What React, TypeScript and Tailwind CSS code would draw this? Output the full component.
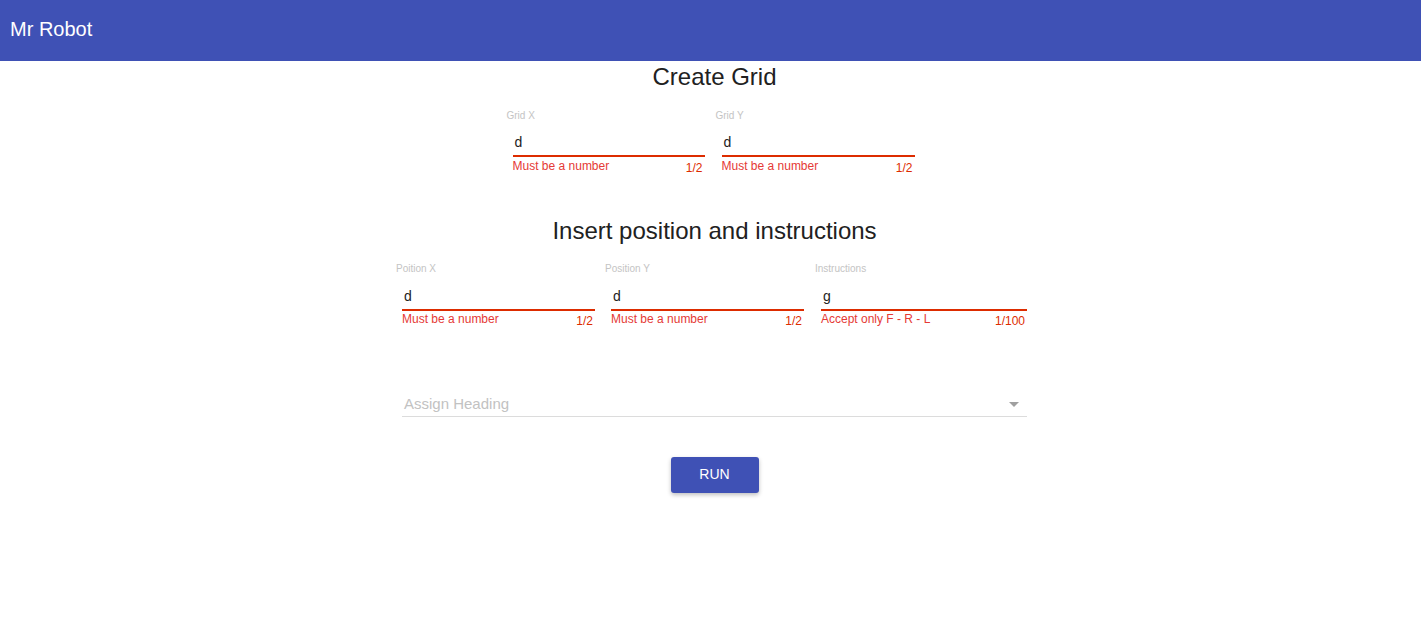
const font = { fontFamily: '"Liberation Sans", Arial, sans-serif' }

type FieldProps = {
  label: string
  value: string
  error: string
  counter: string
  width: string
}

function Field({ label, value, error, counter, width }: FieldProps) {
  return (
    <div className={`flex flex-col ${width}`}>
      <label className="-ml-[6px] text-[10px] leading-[12px] text-[#c4c4c4]">{label}</label>
      <div className="mt-[10.5px] h-[20px] pl-[2px] text-[14px] leading-[20px] text-[#222]">{value}</div>
      <div className="mt-[3px] h-[2px] bg-[#dd2c00]" />
      <div className="mt-[1.5px] flex justify-between text-[12px] leading-[14px]">
        <span className="text-[#e53935]">{error}</span>
        <span className="mt-[2px] pr-[2px] text-[#dd2c00]">{counter}</span>
      </div>
    </div>
  )
}

export default function App() {
  return (
    <div className="min-h-screen bg-white" style={font}>
      {/* App bar */}
      <header className="flex h-[61px] items-center bg-[#3f51b5] px-[10px]">
        <span className="-mt-[3px] text-[20px] text-white">Mr Robot</span>
      </header>

      <div className="flex justify-center pl-[8px]">
        <div className="flex w-[625px] flex-col">
          <h2 className="mt-[2px] text-center text-[24px] leading-[28px] text-[#212121]">Create Grid</h2>

          <div className="mt-[18.5px] flex justify-center gap-[17px] pr-[2px]">
            <Field label="Grid X" value="d" error="Must be a number" counter="1/2" width="w-[192px]" />
            <Field label="Grid Y" value="d" error="Must be a number" counter="1/2" width="w-[193px]" />
          </div>

          <h2 className="mt-[42.5px] text-center text-[24px] leading-[28px] text-[#212121]">
            Insert position and instructions
          </h2>

          <div className="mt-[18px] flex gap-[16px]">
            <Field label="Poition X" value="d" error="Must be a number" counter="1/2" width="w-[193px]" />
            <Field label="Position Y" value="d" error="Must be a number" counter="1/2" width="w-[193px]" />
            <div className="ml-[1px] flex-1">
              <Field label="Instructions" value="g" error="Accept only F - R - L" counter="1/100" width="w-full" />
            </div>
          </div>

          {/* Select */}
          <div className="mt-[65.5px] flex flex-col">
            <div className="flex h-[20px] items-center justify-between pl-[2px] pr-[8px]">
              <span className="text-[15px] leading-[20px] text-[#c2c2c2]">Assign Heading</span>
              <span className="mt-[2px] h-0 w-0 border-x-[5px] border-t-[5px] border-x-transparent border-t-[#a0a0a0]" />
            </div>
            <div className="mt-[2px] h-px bg-[#dcdcdc]" />
          </div>

          <div className="mt-[40px] flex justify-center">
            <button className="h-[36px] w-[88px] rounded-[3px] bg-[#3f51b5] text-[14px] text-white shadow-[0_2px_4px_rgba(0,0,0,0.25)]">
              RUN
            </button>
          </div>
        </div>
      </div>
    </div>
  )
}
